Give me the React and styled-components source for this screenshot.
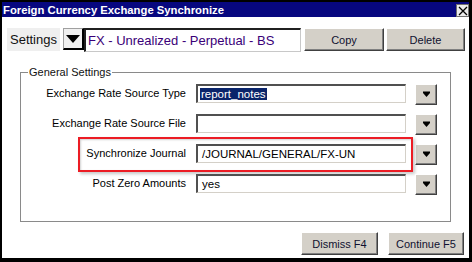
import React from "react";
import styled, { createGlobalStyle } from "styled-components";

const Global = createGlobalStyle`
  * { box-sizing: border-box; }
  html, body { margin: 0; padding: 0; background: #fff; overflow: hidden; }
  body { font-family: "Liberation Sans", Arial, sans-serif; }
`;

const Window = styled.div`
  width: 472px;
  height: 262px;
  background: #fff;
  border-style: solid;
  border-color: #000;
  border-width: 2px 3px 4px 2px;
  display: flex;
  flex-direction: column;
`;

const TitleBar = styled.div`
  height: 15px;
  background: #07077f;
  color: #fff;
  font: bold 11.3px "Liberation Sans", Arial, sans-serif;
  display: flex;
  align-items: center;
  justify-content: space-between;
  padding-left: 1px;
`;

const CloseBox = styled.div`
  width: 13px;
  height: 13px;
  margin-top: 2px;
  background: #ececec;
  border: 1px solid #707070;
  display: flex;
  align-items: center;
  justify-content: center;
`;

const SettingsRow = styled.div`
  display: flex;
  height: 24px;
  margin: 11px 0 0 5px;
`;

const SettingsLabel = styled.div`
  width: 53px;
  height: 23px;
  background: #efefef;
  font-size: 13px;
  line-height: 23px;
  padding-left: 3px;
  color: #111;
`;

const BlackDrop = styled.div`
  width: 21px;
  height: 22px;
  margin-left: 3px;
  background: #f0f0f0;
  border-top: 1px solid #a0a0a0;
  border-left: 1px solid #a0a0a0;
  border-right: 2px solid #000;
  border-bottom: 2px solid #000;
  display: flex;
  align-items: center;
  justify-content: center;
`;

const SettingsInput = styled.div`
  width: 217px;
  height: 24px;
  border-top: 2px solid #202020;
  border-left: 2px solid #202020;
  border-right: 1px solid #c8c8c8;
  border-bottom: 1px solid #c8c8c8;
  font-size: 13px;
  line-height: 21px;
  padding-left: 2px;
  color: #3a0078;
  white-space: nowrap;
`;

const Button = styled.div`
  width: ${(p) => p.$w}px;
  height: 23px;
  margin-left: ${(p) => p.$ml || 0}px;
  background: #d4d0c8;
  border-top: 1px solid #fff;
  border-left: 1px solid #fff;
  border-right: 1px solid #404040;
  border-bottom: 1px solid #404040;
  box-shadow: inset -1px -1px 0 #808080;
  font-size: 11px;
  color: #101030;
  display: flex;
  align-items: center;
  justify-content: center;
  white-space: nowrap;
`;

const GroupBox = styled.div`
  position: relative;
  margin: 20px 0 0 18px;
  width: 431px;
  height: 150px;
  border: 1px solid #8a8a8a;
  padding-top: 11px;
  display: flex;
  flex-direction: column;
  gap: 9px;
`;

const Legend = styled.span`
  position: absolute;
  left: 7px;
  top: -8px;
  background: #fff;
  padding: 0 1px;
  font-size: 11px;
  line-height: 14px;
  color: #111;
`;

const Row = styled.div`
  position: relative;
  display: flex;
  align-items: flex-start;
  height: 21px;
`;

const Label = styled.div`
  width: 165px;
  text-align: right;
  font-size: 11px;
  line-height: 19px;
  color: #000;
  white-space: nowrap;
`;

const Field = styled.div`
  width: 210px;
  height: 19px;
  margin-left: 10px;
  border-top: 2px solid #505050;
  border-left: 2px solid #505050;
  border-right: 1px solid #d4d0c8;
  border-bottom: 1px solid #d4d0c8;
  font-size: 11.5px;
  line-height: 16px;
  padding-left: ${(p) => (p.$pad != null ? p.$pad : 4)}px;
  color: #000;
  white-space: nowrap;
`;

const Selected = styled.span`
  background: #0a246a;
  color: #fff;
  padding: 0 1px;
`;

const DropButton = styled.div`
  width: 22px;
  height: 21px;
  margin-left: 9px;
  background: #d4d0c8;
  border-top: 1px solid #fff;
  border-left: 1px solid #fff;
  border-right: 1px solid #404040;
  border-bottom: 1px solid #404040;
  box-shadow: inset -1px -1px 0 #808080;
  display: flex;
  align-items: center;
  justify-content: center;
`;

const Highlight = styled.div`
  position: absolute;
  left: 57px;
  top: -7px;
  width: 335px;
  height: 35px;
  border: 2px solid #ec1c24;
  box-shadow: 2px 2px 3px rgba(0, 0, 0, 0.22), inset 1px 1px 2px rgba(0, 0, 0, 0.18);
  pointer-events: none;
`;

const Footer = styled.div`
  display: flex;
  justify-content: flex-end;
  gap: 10px;
  margin-top: 10px;
  padding-right: 5px;
`;

const SmallArrow = () => (
  <svg width="9" height="7" viewBox="0 0 9 7">
    <polygon points="1,0.5 8,0.5 8,2 4.5,6 1,2" fill="#000" />
  </svg>
);

const BigArrow = () => (
  <svg width="14" height="8" viewBox="0 0 14 8">
    <polygon points="0,0 14,0 7,8" fill="#000" />
  </svg>
);

const rows = [
  { label: "Exchange Rate Source Type", value: <Selected>report_notes</Selected>, pad: 2 },
  { label: "Exchange Rate Source File", value: "" },
  { label: "Synchronize Journal", value: "/JOURNAL/GENERAL/FX-UN", highlight: true },
  { label: "Post Zero Amounts", value: "yes" },
];

export default function App() {
  return (
    <>
      <Global />
      <Window>
        <TitleBar>
          <span>Foreign Currency Exchange Synchronize</span>
          <CloseBox>
            <svg width="10" height="10" viewBox="0 0 10 10">
              <path d="M1 1 L9 9 M9 1 L1 9" stroke="#000" strokeWidth="1.3" />
            </svg>
          </CloseBox>
        </TitleBar>
        <SettingsRow>
          <SettingsLabel>Settings</SettingsLabel>
          <BlackDrop>
            <BigArrow />
          </BlackDrop>
          <SettingsInput>FX - Unrealized - Perpetual - BS</SettingsInput>
          <Button $w={80} $ml={3}>Copy</Button>
          <Button $w={79} $ml={2}>Delete</Button>
        </SettingsRow>
        <GroupBox>
          <Legend>General Settings</Legend>
          {rows.map((r) => (
            <Row key={r.label}>
              {r.highlight && <Highlight />}
              <Label>{r.label}</Label>
              <Field $pad={r.pad}>{r.value}</Field>
              <DropButton>
                <SmallArrow />
              </DropButton>
            </Row>
          ))}
        </GroupBox>
        <Footer>
          <Button $w={77}>Dismiss F4</Button>
          <Button $w={76}>Continue F5</Button>
        </Footer>
      </Window>
    </>
  );
}
